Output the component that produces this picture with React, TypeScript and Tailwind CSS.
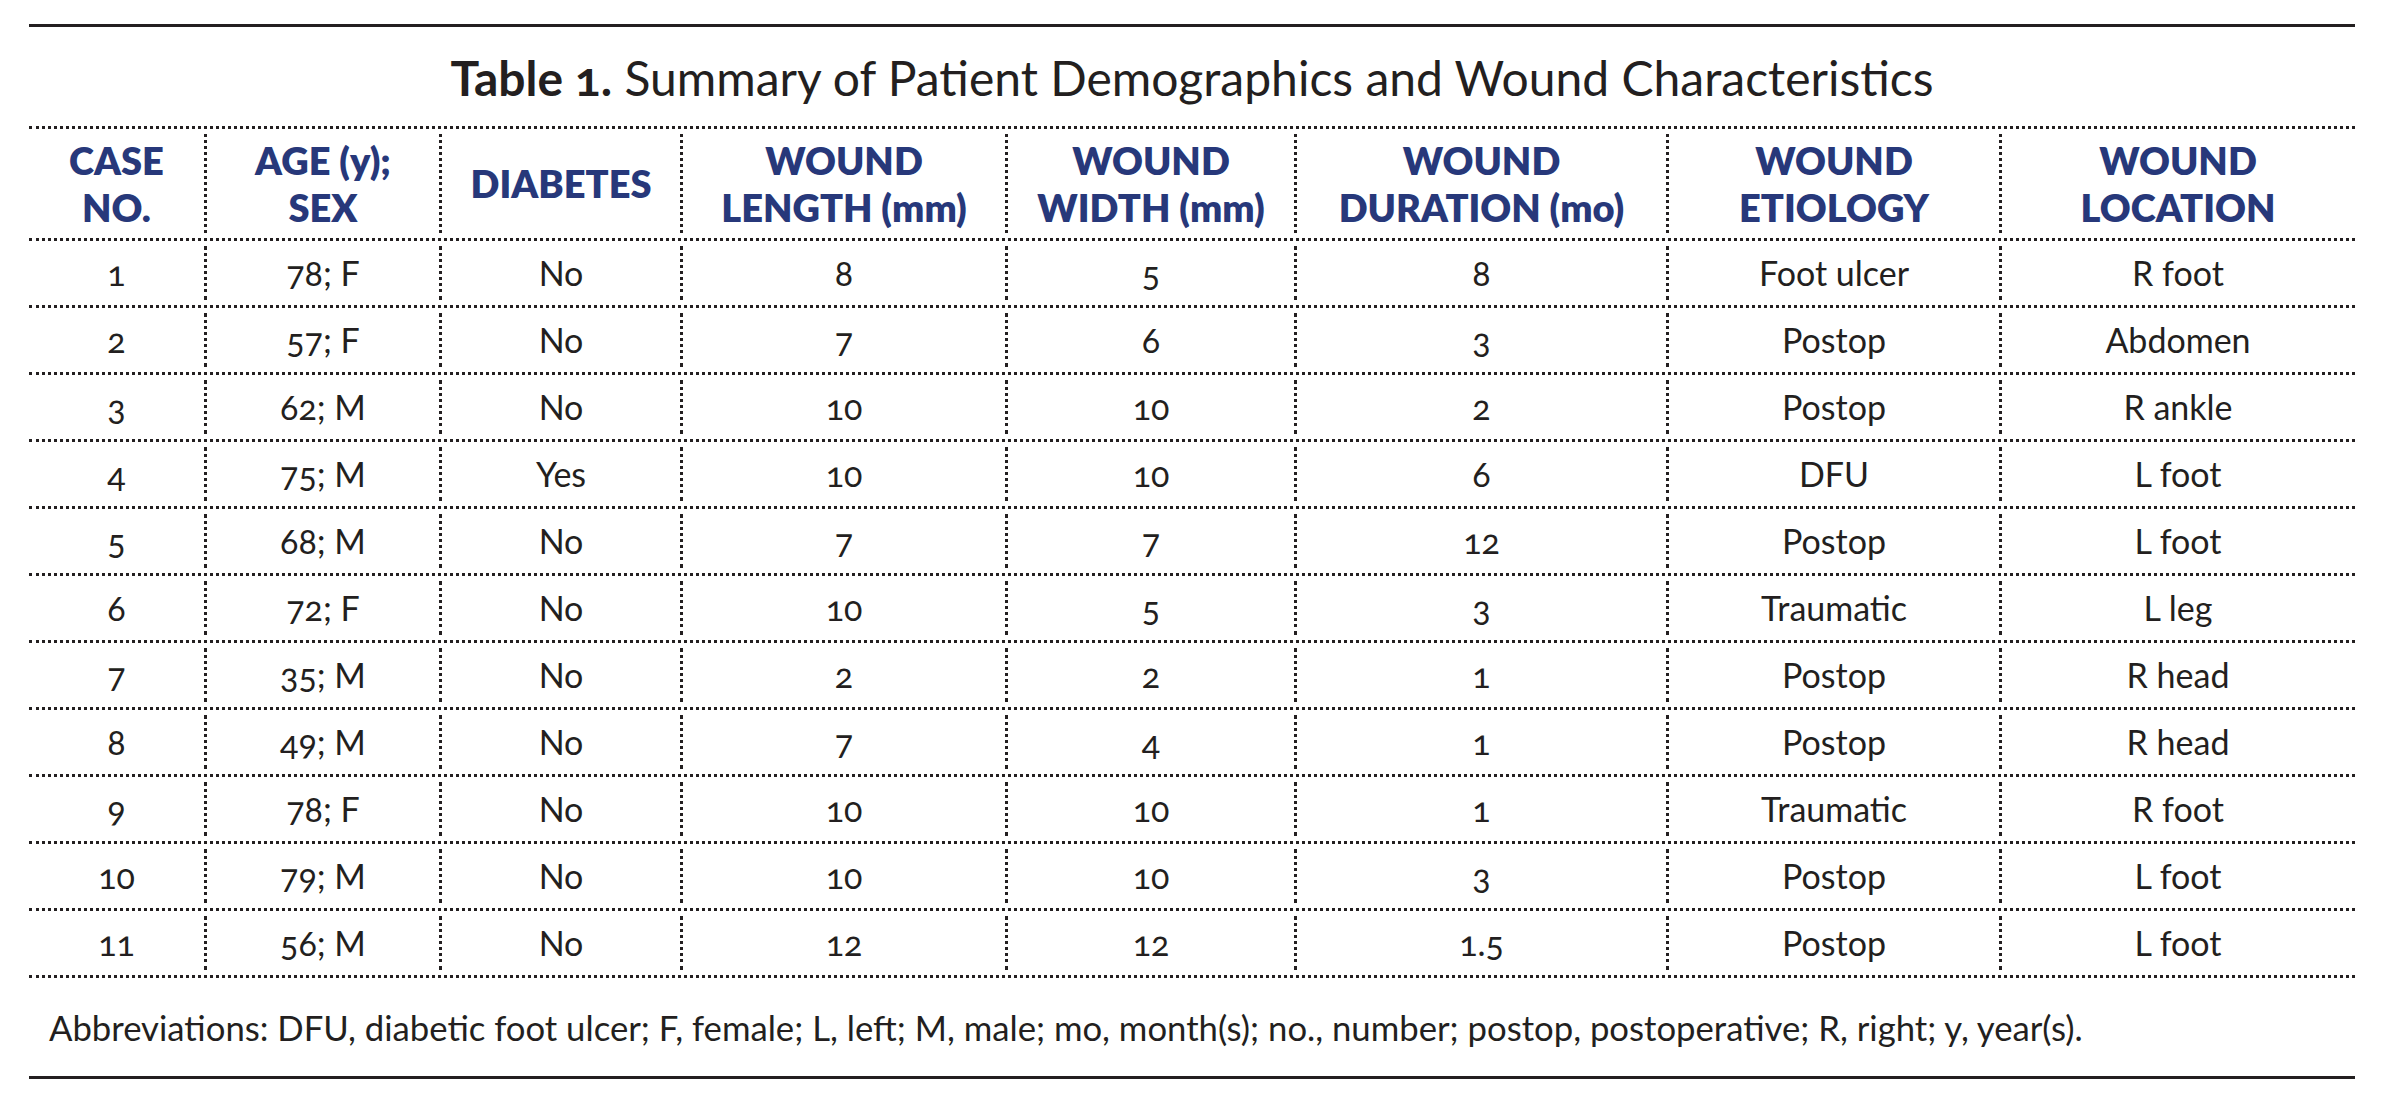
import React from 'react';

type Row = [string, string, string, string, string, string, string, string];

const rows: Row[] = [
  ['1', '78; F', 'No', '8', '5', '8', 'Foot ulcer', 'R foot'],
  ['2', '57; F', 'No', '7', '6', '3', 'Postop', 'Abdomen'],
  ['3', '62; M', 'No', '10', '10', '2', 'Postop', 'R ankle'],
  ['4', '75; M', 'Yes', '10', '10', '6', 'DFU', 'L foot'],
  ['5', '68; M', 'No', '7', '7', '12', 'Postop', 'L foot'],
  ['6', '72; F', 'No', '10', '5', '3', 'Traumatic', 'L leg'],
  ['7', '35; M', 'No', '2', '2', '1', 'Postop', 'R head'],
  ['8', '49; M', 'No', '7', '4', '1', 'Postop', 'R head'],
  ['9', '78; F', 'No', '10', '10', '1', 'Traumatic', 'R foot'],
  ['10', '79; M', 'No', '10', '10', '3', 'Postop', 'L foot'],
  ['11', '56; M', 'No', '12', '12', '1.5', 'Postop', 'L foot'],
];

const headers: [string, string][] = [
  ['CASE', 'NO.'],
  ['AGE (y);', 'SEX'],
  ['DIABETES', ''],
  ['WOUND', 'LENGTH (mm)'],
  ['WOUND', 'WIDTH (mm)'],
  ['WOUND', 'DURATION (mo)'],
  ['WOUND', 'ETIOLOGY'],
  ['WOUND', 'LOCATION'],
];

// column widths measured off the printed table
const cols = 'grid grid-cols-[175px_235px_241px_325px_289px_372px_333px_355px]';

const Cell: React.FC<{ first: boolean; children: React.ReactNode }> = ({ first, children }) => (
  <div
    className={
      'my-[5px] flex flex-col items-center justify-center text-center ' +
      (first ? '' : 'border-l-[3px] border-dotted border-[#231f20]')
    }
  >
    {children}
  </div>
);

export default function App() {
  return (
    <div
      className="h-[1104px] w-[2384px] bg-white px-[29px] pt-[24px] text-[#231f20]"
      style={{ fontFamily: 'Lato, "Open Sans", sans-serif' }}
    >
      <div className="border-t-[3px] border-[#231f20]" />

      <h1 className="mt-[27px] h-[48px] text-center text-[48px] leading-none oldstyle-nums">
        <span className="font-bold">Table 1.</span> Summary of Patient Demographics and Wound Characteristics
      </h1>

      <div className="mt-[24px] border-t-[3px] border-dotted border-[#231f20]">
        {/* header */}
        <div className={cols + ' h-[112px] border-b-[3px] border-dotted border-[#231f20]'}>
          {headers.map((h, i) => (
            <Cell key={i} first={i === 0}>
              <div className="text-[38px] font-extrabold leading-[47px] text-[#27387a]">
                <div>{h[0]}</div>
                {h[1] && <div>{h[1]}</div>}
              </div>
            </Cell>
          ))}
        </div>

        {rows.map((r, ri) => (
          <div key={ri} className={cols + ' h-[67px] border-b-[3px] border-dotted border-[#231f20]'}>
            {r.map((v, ci) => (
              <Cell key={ci} first={ci === 0}>
                <span className="text-[34px] leading-none oldstyle-nums">{v}</span>
              </Cell>
            ))}
          </div>
        ))}
      </div>

      <p className="mt-[33px] h-[35px] pl-[20px] text-[34.7px] leading-none">
        Abbreviations: DFU, diabetic foot ulcer; F, female; L, left; M, male; mo, month(s); no., number; postop,
        postoperative; R, right; y, year(s).
      </p>

      <div className="mt-[30px] border-t-[3px] border-[#231f20]" />
    </div>
  );
}
